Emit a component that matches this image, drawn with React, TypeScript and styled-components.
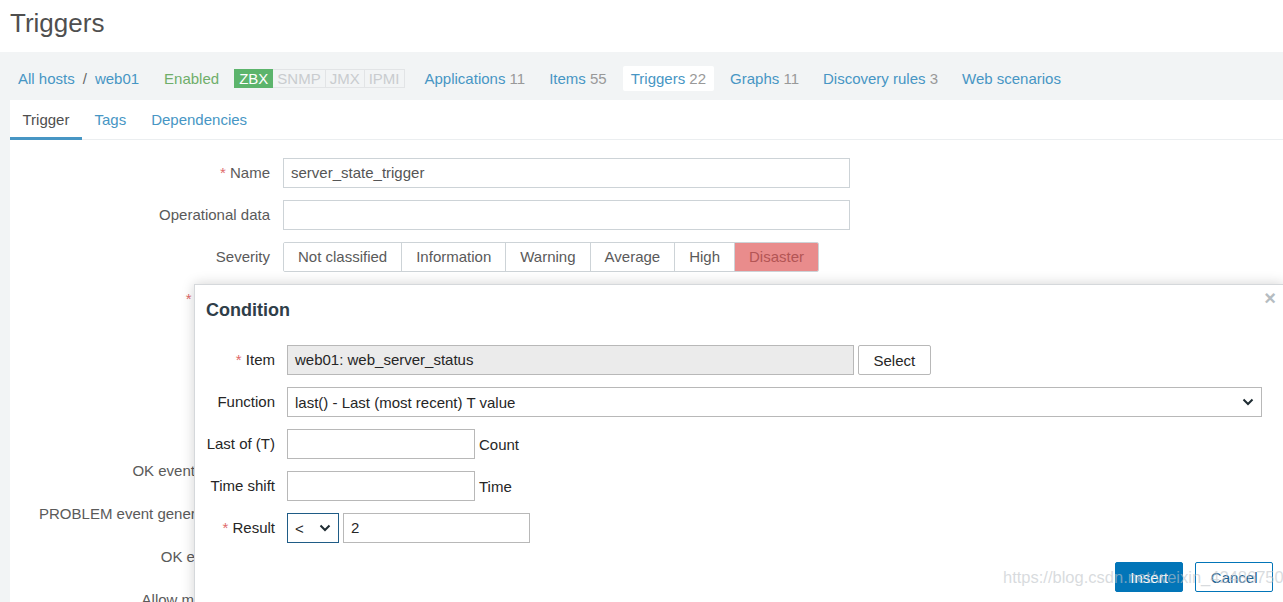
import styled, { createGlobalStyle } from 'styled-components';

const GlobalStyle = createGlobalStyle`
  html, body {
    margin: 0;
    height: 602px;
    overflow: hidden;
    background: #f2f4f5;
    font-family: "Liberation Sans", Arial, sans-serif;
    font-size: 15px;
  }
  * { box-sizing: border-box; }
`;

const severities = ['Not classified', 'Information', 'Warning', 'Average', 'High', 'Disaster'];

const navItems = [
  { name: 'Applications', count: '11' },
  { name: 'Items', count: '55' },
  { name: 'Triggers', count: '22', active: true },
  { name: 'Graphs', count: '11' },
  { name: 'Discovery rules', count: '3' },
  { name: 'Web scenarios' },
];

function Chevron() {
  return (
    <svg width="12" height="8" viewBox="0 0 12 8">
      <polyline points="1.5,1.5 6,6 10.5,1.5" fill="none" stroke="#1f2c33" strokeWidth="2" />
    </svg>
  );
}

export default function App() {
  return (
    <>
      <GlobalStyle />
      <Page>
        <Header>
          <h1>Triggers</h1>
        </Header>

        <NavBar>
          <Crumbs>
            <Link>All hosts</Link>
            <Sep>/</Sep>
            <Link>web01</Link>
          </Crumbs>
          <Status>Enabled</Status>
          <Badges>
            <Badge $on>ZBX</Badge>
            <Badge>SNMP</Badge>
            <Badge>JMX</Badge>
            <Badge>IPMI</Badge>
          </Badges>
          <NavList>
            {navItems.map((n) => (
              <NavItem key={n.name} $active={n.active}>
                {n.name}
                {n.count && <Count> {n.count}</Count>}
              </NavItem>
            ))}
          </NavList>
        </NavBar>

        <Panel>
          <Tabs>
            <Tab $active>Trigger</Tab>
            <Tab>Tags</Tab>
            <Tab>Dependencies</Tab>
          </Tabs>

          <Form>
            <Row>
              <Label><Req>*</Req> Name</Label>
              <TextBox>server_state_trigger</TextBox>
            </Row>
            <Row>
              <Label>Operational data</Label>
              <TextBox />
            </Row>
            <Row>
              <Label>Severity</Label>
              <Segments>
                {severities.map((s) => (
                  <Segment key={s} $selected={s === 'Disaster'}>{s}</Segment>
                ))}
              </Segments>
            </Row>
            <Row>
              <Label><Req>*</Req> Expression</Label>
              <TextArea />
            </Row>
            <Row>
              <Label />
              <Link>Expression constructor</Link>
            </Row>
            <Row $spaced>
              <Label>OK event generation</Label>
              <Segments>
                <Segment $selected>Expression</Segment>
                <Segment>Recovery expression</Segment>
                <Segment>None</Segment>
              </Segments>
            </Row>
            <Row $spaced>
              <Label>PROBLEM event generation mode</Label>
              <Segments>
                <Segment $selected>Single</Segment>
                <Segment>Multiple</Segment>
              </Segments>
            </Row>
            <Row $spaced>
              <Label>OK event closes</Label>
              <Segments>
                <Segment $selected>All problems</Segment>
                <Segment>All problems if tag values match</Segment>
              </Segments>
            </Row>
            <Row $spaced>
              <Label>Allow manual close</Label>
              <Check />
            </Row>
          </Form>
        </Panel>

        <Dialog>
          <Close>×</Close>
          <DialogTitle>Condition</DialogTitle>
          <DialogForm>
            <DRow>
              <DLabel><Req>*</Req> Item</DLabel>
              <DFields>
                <DInput $width={567} $readonly>web01: web_server_status</DInput>
                <Button>Select</Button>
              </DFields>
            </DRow>
            <DRow>
              <DLabel>Function</DLabel>
              <DSelect $width={975}>
                last() - Last (most recent) T value
                <Chevron />
              </DSelect>
            </DRow>
            <DRow>
              <DLabel>Last of (T)</DLabel>
              <DFields>
                <DInput $width={188} />
                <Hint>Count</Hint>
              </DFields>
            </DRow>
            <DRow>
              <DLabel>Time shift</DLabel>
              <DFields>
                <DInput $width={188} />
                <Hint>Time</Hint>
              </DFields>
            </DRow>
            <DRow>
              <DLabel><Req>*</Req> Result</DLabel>
              <DFields>
                <DSelect $width={52} $focused>
                  &lt;
                  <Chevron />
                </DSelect>
                <DInput $width={187}>2</DInput>
              </DFields>
            </DRow>
          </DialogForm>
          <Footer>
            <Button $primary>Insert</Button>
            <Button $outline>Cancel</Button>
          </Footer>
        </Dialog>

        <Watermark>https://blog.csdn.net/weixin_42486750</Watermark>
      </Page>
    </>
  );
}

const Page = styled.div`
  position: relative;
  height: 602px;
  overflow: hidden;
  display: flex;
  flex-direction: column;
`;

const Header = styled.header`
  flex-shrink: 0;
  height: 52px;
  background: #fff;
  padding: 6px 10px 0;

  h1 {
    margin: 0;
    font-size: 26px;
    font-weight: normal;
    line-height: 34px;
    color: #4f4f4f;
  }
`;

const NavBar = styled.nav`
  flex-shrink: 0;
  height: 48px;
  display: flex;
  align-items: center;
  padding: 4px 0 0 10px;
`;

const Crumbs = styled.div`
  display: flex;
  align-items: center;
  padding: 0 8px;
  gap: 8px;
`;

const Link = styled.span`
  color: #4796c4;
  align-self: center;
`;

const Sep = styled.span`
  color: #666;
`;

const Status = styled.span`
  color: #6fae6a;
  margin-left: 17px;
`;

const Badges = styled.div`
  display: flex;
  margin-left: 15px;
  height: 19px;
`;

const Badge = styled.span<{ $on?: boolean }>`
  padding: 0 4px;
  line-height: 17px;
  border: 1px solid ${({ $on }) => ($on ? '#5cb46c' : '#e2e4e6')};
  border-left-width: ${({ $on }) => ($on ? '1px' : '0')};
  background: ${({ $on }) => ($on ? '#5cb46c' : 'transparent')};
  color: ${({ $on }) => ($on ? '#fff' : '#c9cccf')};
`;

const NavList = styled.div`
  display: flex;
  gap: 8px;
  margin-left: 12px;
`;

const NavItem = styled.span<{ $active?: boolean }>`
  padding: 0 8px;
  height: 25px;
  line-height: 25px;
  color: #4796c4;
  background: ${({ $active }) => ($active ? '#fff' : 'transparent')};
  border-radius: 2px;
`;

const Count = styled.span`
  color: #999;
`;

const Panel = styled.section`
  flex: 1;
  min-height: 0;
  overflow: hidden;
  margin-left: 10px;
  background: #fff;
`;

const Tabs = styled.div`
  display: flex;
  height: 40px;
  border-bottom: 1px solid #ebeef0;
`;

const Tab = styled.span<{ $active?: boolean }>`
  padding: 0 12.5px;
  line-height: 40px;
  color: ${({ $active }) => ($active ? '#4f4f4f' : '#4796c4')};
  border-bottom: 3px solid ${({ $active }) => ($active ? '#4796c4' : 'transparent')};
  height: 40px;
  margin-bottom: -1px;
`;

const Form = styled.div`
  display: flex;
  flex-direction: column;
  gap: 12px;
  padding-top: 18px;
`;

const Row = styled.div<{ $spaced?: boolean }>`
  display: grid;
  grid-template-columns: 260px auto;
  column-gap: 13px;
  align-items: start;
  justify-items: start;
  min-height: ${({ $spaced }) => ($spaced ? '31px' : '30px')};
`;

const Label = styled.label`
  justify-self: end;
  line-height: 30px;
  color: #5a5a5a;
  white-space: nowrap;
`;

const Req = styled.span`
  color: #e06a6a;
`;

const TextBox = styled.div`
  width: 567px;
  height: 30px;
  padding: 0 7px;
  line-height: 28px;
  border: 1px solid #cdd3d7;
  color: #555;
`;

const TextArea = styled(TextBox)`
  height: 118px;
`;

const Check = styled.span`
  width: 16px;
  height: 16px;
  margin-top: 7px;
  border: 1px solid #cdd3d7;
`;

const Segments = styled.div`
  display: flex;
  border: 1px solid #cdd3d7;
  border-radius: 2px;
  overflow: hidden;
  height: 30px;
`;

const Segment = styled.span<{ $selected?: boolean }>`
  padding: 0 14px;
  line-height: 28px;
  color: ${({ $selected }) => ($selected ? '#b35555' : '#5a5a5a')};
  background: ${({ $selected }) => ($selected ? '#e98c8c' : '#fff')};
  & + & {
    border-left: 1px solid #cdd3d7;
  }
`;

const Dialog = styled.div`
  position: absolute;
  left: 194px;
  top: 284px;
  right: -1px;
  height: 340px;
  background: #fff;
  border: 1px solid #d5d8db;
  box-shadow: 0 0 12px rgba(0, 0, 0, 0.18);
  padding: 13px 10px 0 11px;
  color: #1f2c33;
`;

const Close = styled.span`
  position: absolute;
  top: 2px;
  right: 7px;
  font-size: 20px;
  font-weight: bold;
  color: #b5bcc1;
`;

const DialogTitle = styled.h2`
  margin: 0;
  font-size: 18px;
  line-height: 24px;
  font-weight: bold;
  color: #2f3e49;
`;

const DialogForm = styled.div`
  display: flex;
  flex-direction: column;
  gap: 12px;
  margin-top: 23px;
`;

const DRow = styled.div`
  display: grid;
  grid-template-columns: 69px auto;
  column-gap: 12px;
  justify-items: start;
`;

const DLabel = styled.label`
  justify-self: end;
  line-height: 30px;
  color: #262626;
  white-space: nowrap;
`;

const DFields = styled.div`
  display: flex;
  align-items: center;
  gap: 4px;
`;

const DInput = styled.div<{ $width: number; $readonly?: boolean }>`
  width: ${({ $width }) => $width}px;
  height: 30px;
  padding: 0 7px;
  line-height: 28px;
  border: 1px solid #b8b8b8;
  background: ${({ $readonly }) => ($readonly ? '#ebebeb' : '#fff')};
  color: #262626;
`;

const DSelect = styled.div<{ $width: number; $focused?: boolean }>`
  width: ${({ $width }) => $width}px;
  height: 30px;
  padding: 0 7px;
  display: flex;
  align-items: center;
  justify-content: space-between;
  border: 1px solid ${({ $focused }) => ($focused ? '#1f5c86' : '#b8b8b8')};
  color: #262626;
`;

const Hint = styled.span`
  color: #262626;
`;

const Button = styled.button<{ $primary?: boolean; $outline?: boolean }>`
  height: 30px;
  padding: 0 14.5px;
  font-family: inherit;
  font-size: 15px;
  border-radius: 2px;
  border: 1px solid ${({ $primary, $outline }) => ($primary || $outline ? '#0275b8' : '#b8b8b8')};
  background: ${({ $primary }) => ($primary ? '#0275b8' : '#fff')};
  color: ${({ $primary, $outline }) => ($primary ? '#fff' : $outline ? '#1c5f91' : '#262626')};
`;

const Footer = styled.div`
  display: flex;
  justify-content: flex-end;
  gap: 12px;
  margin-top: 19px;
`;

const Watermark = styled.span`
  position: absolute;
  left: 1003px;
  top: 568px;
  font-size: 16.5px;
  color: rgba(190, 195, 200, 0.6);
  pointer-events: none;
`;
